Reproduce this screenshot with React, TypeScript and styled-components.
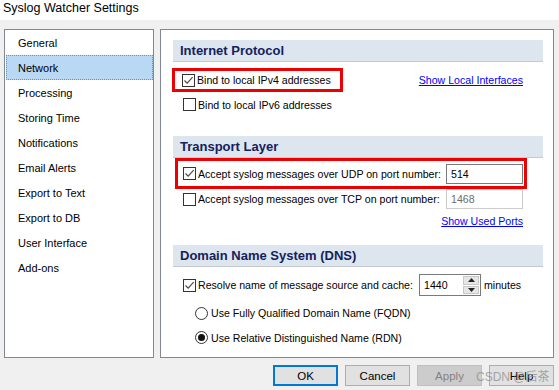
import * as React from 'react';
import styled, { createGlobalStyle } from 'styled-components';

const GlobalStyle = createGlobalStyle`
	html, body {
		margin: 0;
		padding: 0;
		background: #f0f0f0;
	}
	body {
		width: 559px;
		height: 390px;
		overflow: hidden;
		font-family: "Liberation Sans", Arial, sans-serif;
		font-size: 11px;
		color: #000;
	}
`;

const pages = [
	'General',
	'Network',
	'Processing',
	'Storing Time',
	'Notifications',
	'Email Alerts',
	'Export to Text',
	'Export to DB',
	'User Interface',
	'Add-ons',
];

const Window = styled.div`
	position: relative;
	width: 559px;
	height: 390px;
	display: flex;
	flex-direction: column;
	background: #f0f0f0;
`;

const TitleBar = styled.div`
	height: 20px;
	padding-left: 3px;
	background: #fff;
	font-size: 12.5px;
	line-height: 17px;
`;

const Body = styled.div`
	display: flex;
	gap: 6px;
	height: 329px;
	padding: 9px 5px 0 4px;
`;

const ListPanel = styled.div`
	width: 150px;
	box-sizing: border-box;
	border: 1px solid #828790;
	background: #fff;
	display: flex;
	flex-direction: column;
`;

const ListItem = styled.div<{ $selected?: boolean }>`
	height: 25px;
	box-sizing: border-box;
	margin: 0 0 0 1px;
	padding-left: 11px;
	display: flex;
	align-items: center;
	background: ${p => (p.$selected ? '#b9d8f3' : 'transparent')};
	border: 1px dotted ${p => (p.$selected ? '#c47a3a' : 'transparent')};
`;

const ContentPanel = styled.div`
	flex: 1;
	box-sizing: border-box;
	border: 1px solid #828790;
	background: #fff;
	padding: 10px 10px 0 12px;
	display: flex;
	flex-direction: column;
	font-size: 10.6px;
`;

const SectionHeader = styled.div<{ $top?: number }>`
	height: 21px;
	margin-top: ${p => p.$top || 0}px;
	padding-left: 7px;
	background: #dde6ee;
	border-bottom: 1px solid #c4cad1;
	color: #14215e;
	font-size: 13px;
	font-weight: bold;
	line-height: 21px;
`;

const Row = styled.div<{ $h: number; $top?: number; $pad?: number; $end?: boolean }>`
	height: ${p => p.$h}px;
	margin-top: ${p => p.$top || 0}px;
	padding-left: ${p => p.$pad || 0}px;
	display: flex;
	align-items: center;
	justify-content: ${p => (p.$end ? 'flex-end' : 'space-between')};
`;

const OptionBox = styled.div<{ $marked?: boolean; $pad: number; $padR?: number; $shift?: number }>`
	height: 100%;
	box-sizing: border-box;
	margin-left: ${p => p.$shift || 0}px;
	padding: 0 ${p => p.$padR ?? 1}px 0 ${p => p.$pad}px;
	border: 3px solid ${p => (p.$marked ? '#ee0000' : 'transparent')};
	display: flex;
	align-items: center;
`;

const Option = styled.div`
	display: flex;
	align-items: center;
	gap: 2px;
`;

const Label = styled.span<{ $w?: number }>`
	white-space: nowrap;
	width: ${p => (p.$w ? `${p.$w}px` : 'auto')};
`;

const Box = styled.span`
	width: 13px;
	height: 13px;
	box-sizing: border-box;
	border: 1px solid #333;
	background: #fff;
	display: inline-flex;
	align-items: center;
	justify-content: center;
	flex: none;
`;

const Round = styled.span`
	width: 13px;
	height: 13px;
	box-sizing: border-box;
	border: 1px solid #333;
	border-radius: 50%;
	background: #fff;
	display: inline-flex;
	align-items: center;
	justify-content: center;
	flex: none;
`;

const Dot = styled.span`
	width: 7px;
	height: 7px;
	border-radius: 50%;
	background: #111;
`;

const Link = styled.a`
	color: #0000ff;
	text-decoration: underline;
	margin-right: 20px;
	cursor: pointer;
`;

const Field = styled.div<{ $disabled?: boolean }>`
	width: 77px;
	height: 20px;
	box-sizing: border-box;
	border: 1px solid ${p => (p.$disabled ? '#cccccc' : '#7a7a7a')};
	padding-left: 4px;
	display: flex;
	align-items: center;
	color: ${p => (p.$disabled ? '#6d6d6d' : '#000')};
	background: #fff;
`;

const Spin = styled.div`
	width: 62px;
	height: 22px;
	box-sizing: border-box;
	border: 1px solid #7a7a7a;
	display: flex;
	align-items: center;
	justify-content: space-between;
	padding: 1px 1px 1px 4px;
	margin-right: 3px;
`;

const SpinButtons = styled.div`
	width: 16px;
	height: 100%;
	display: flex;
	flex-direction: column;
	gap: 1px;
`;

const SpinButton = styled.div`
	flex: 1;
	background: #e6e6e6;
	border: 1px solid #c8c8c8;
	display: flex;
	align-items: center;
	justify-content: center;
`;

const RadioOption = styled.div`
	display: flex;
	align-items: center;
	gap: 3px;
`;

const ButtonBar = styled.div`
	display: flex;
	justify-content: flex-end;
	gap: 7px;
	padding: 7px 5px 0 0;
`;

const Button = styled.div<{ $primary?: boolean; $disabled?: boolean }>`
	width: 65px;
	height: 21px;
	box-sizing: border-box;
	border: ${p => (p.$primary ? '2px solid #0078d7' : `1px solid ${p.$disabled ? '#bfbfbf' : '#adadad'}`)};
	background: ${p => (p.$disabled ? '#cccccc' : '#e1e1e1')};
	color: ${p => (p.$disabled ? '#838383' : '#000')};
	display: flex;
	align-items: center;
	justify-content: center;
	font-size: 11.5px;
`;

const Watermark = styled.div`
	position: absolute;
	left: 476px;
	top: 367px;
	font-size: 12px;
	color: rgba(140, 140, 140, 0.75);
	font-family: "Liberation Sans", "Noto Sans CJK SC", sans-serif;
	pointer-events: none;
`;

const CheckBox = ({ checked }: { checked?: boolean }) => (
	<Box>
		{checked && (
			<svg width="11" height="11" viewBox="0 0 11 11">
				<path d="M1.5 5.5 L4.2 8.2 L9.6 2.2" stroke="#4a4a4a" strokeWidth="1.2" fill="none" />
			</svg>
		)}
	</Box>
);

const Radio = ({ checked }: { checked?: boolean }) => (
	<Round>{checked && <Dot />}</Round>
);

const Arrow = ({ up }: { up?: boolean }) => (
	<svg width="7" height="4" viewBox="0 0 7 4">
		<path d={up ? 'M0 4 L3.5 0 L7 4 Z' : 'M0 0 L3.5 4 L7 0 Z'} fill="#222" />
	</svg>
);

const App = () => (
	<Window>
		<GlobalStyle />
		<TitleBar>Syslog Watcher Settings</TitleBar>
		<Body>
			<ListPanel>
				{pages.map(p => (
					<ListItem key={p} $selected={p === 'Network'}>{p}</ListItem>
				))}
			</ListPanel>
			<ContentPanel>
				<SectionHeader>Internet Protocol</SectionHeader>
				<Row $h={24} $top={6}>
					<OptionBox $marked $pad={7} $padR={9} $shift={-1}>
						<Option>
							<CheckBox checked />
							<Label>Bind to local IPv4 addresses</Label>
						</Option>
					</OptionBox>
					<Link>Show Local Interfaces</Link>
				</Row>
				<Row $h={25} $pad={10}>
					<Option>
						<CheckBox />
						<Label>Bind to local IPv6 addresses</Label>
					</Option>
				</Row>

				<SectionHeader $top={19}>Transport Layer</SectionHeader>
				<Row $h={31}>
					<OptionBox $marked $pad={5} $shift={2}>
						<Option>
							<CheckBox checked />
							<Label $w={248}>Accept syslog messages over UDP on port number:</Label>
						</Option>
						<Field>514</Field>
					</OptionBox>
				</Row>
				<Row $h={20} $pad={10}>
					<Option>
						<CheckBox />
						<Label $w={248}>Accept syslog messages over TCP on port number:</Label>
					</Option>
					<Field $disabled>1468</Field>
					<span style={{ flex: 1 }} />
				</Row>
				<Row $h={24} $end>
					<Link>Show Used Ports</Link>
				</Row>

				<SectionHeader $top={12}>Domain Name System (DNS)</SectionHeader>
				<Row $h={22} $top={7} $pad={10}>
					<Option>
						<CheckBox checked />
						<Label $w={221}>Resolve name of message source and cache:</Label>
					</Option>
					<Spin>
						<span>1440</span>
						<SpinButtons>
							<SpinButton><Arrow up /></SpinButton>
							<SpinButton><Arrow /></SpinButton>
						</SpinButtons>
					</Spin>
					<Label>minutes</Label>
					<span style={{ flex: 1 }} />
				</Row>
				<Row $h={24} $top={5} $pad={22}>
					<RadioOption>
						<Radio />
						<Label>Use Fully Qualified Domain Name (FQDN)</Label>
					</RadioOption>
				</Row>
				<Row $h={25} $pad={22}>
					<RadioOption>
						<Radio checked />
						<Label>Use Relative Distinguished Name (RDN)</Label>
					</RadioOption>
				</Row>
			</ContentPanel>
		</Body>
		<ButtonBar>
			<Button $primary>OK</Button>
			<Button>Cancel</Button>
			<Button $disabled>Apply</Button>
			<Button>Help</Button>
		</ButtonBar>
		<Watermark>CSDN @后茶</Watermark>
	</Window>
);

export default App;
